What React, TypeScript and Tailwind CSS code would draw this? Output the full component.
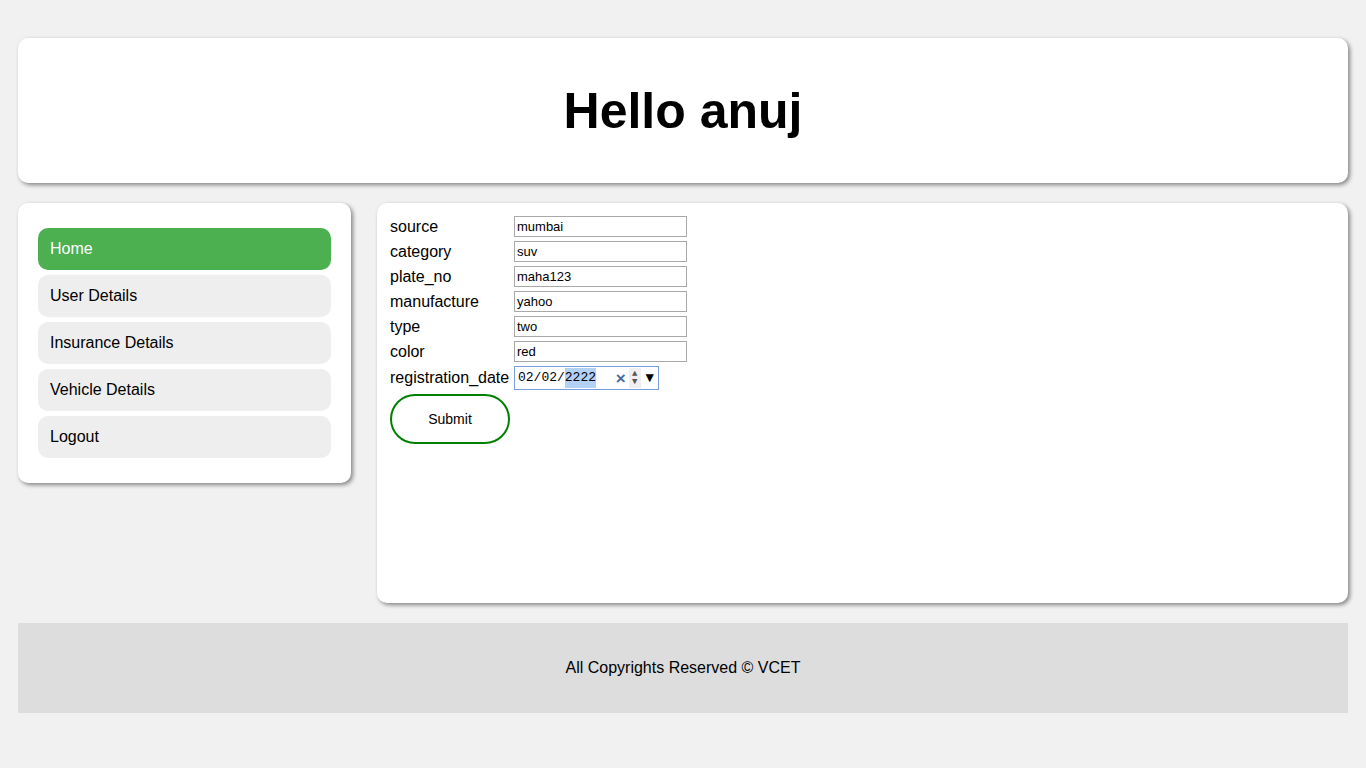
import React from 'react';

const fields = [
  { label: 'source', value: 'mumbai' },
  { label: 'category', value: 'suv' },
  { label: 'plate_no', value: 'maha123' },
  { label: 'manufacture', value: 'yahoo' },
  { label: 'type', value: 'two' },
  { label: 'color', value: 'red' },
];

const navItems = ['Home', 'User Details', 'Insurance Details', 'Vehicle Details', 'Logout'];

const App: React.FC = () => {
  return (
    <div className="min-h-[768px] bg-[#f1f1f1] px-[18px] pt-[38px] font-['Liberation_Sans',Arial,sans-serif] text-black">
      <header className="flex h-[145px] items-center justify-center rounded-[10px] bg-white shadow-[2px_2px_4px_rgba(0,0,0,0.45)]">
        <h1 className="text-[50px] font-bold leading-none">Hello anuj</h1>
      </header>

      <div className="mt-5 flex h-[400px] items-start gap-[26px]">
        <nav className="flex w-[333px] shrink-0 flex-col gap-[5px] rounded-[10px] bg-white px-5 py-[25px] shadow-[2px_2px_4px_rgba(0,0,0,0.45)]">
          {navItems.map((item, i) => (
            <a
              key={item}
              href="#"
              className={
                i === 0
                  ? 'flex h-[42px] items-center rounded-[10px] bg-[#4caf50] pl-3 text-base text-white'
                  : 'flex h-[42px] items-center rounded-[10px] bg-[#eeeeee] pl-3 text-base text-black'
              }
            >
              {item}
            </a>
          ))}
        </nav>

        <main className="h-full flex-1 rounded-[10px] bg-white px-[13px] pt-[13px] shadow-[2px_2px_4px_rgba(0,0,0,0.45)]">
          <form className="flex flex-col" onSubmit={(e) => e.preventDefault()}>
            {fields.map((f) => (
              <div key={f.label} className="flex h-[25px] items-start">
                <label className="mt-[1px] w-[124px] text-base leading-[20px]">{f.label}</label>
                <input
                  type="text"
                  defaultValue={f.value}
                  className="h-[21px] w-[173px] border border-[#a9a9a9] px-[2px] text-[13px] outline-none"
                />
              </div>
            ))}
            <div className="flex h-[28px] items-start">
              <label className="mt-[2px] w-[124px] text-base leading-[20px]">registration_date</label>
              <div className="flex h-[24px] w-[145px] items-center border border-[#7a9ce0] pl-[3px] pr-[4px] font-['Liberation_Mono',monospace] text-[13px]">
                <span>02/02/</span>
                <span className="bg-[#b3d0f5]">2222</span>
                <span className="ml-auto font-['Liberation_Sans',sans-serif] text-[17px] font-bold leading-none text-[#4a6a9a]">×</span>
                <span className="ml-[3px] flex h-[20px] w-[12px] flex-col items-center justify-center bg-[#efefef] text-[9px] leading-[8px] text-[#555]">
                  <span>▲</span>
                  <span>▼</span>
                </span>
                <span className="ml-[5px] text-[14px] leading-none">▼</span>
              </div>
            </div>
            <button
              type="submit"
              className="h-[50px] w-[120px] rounded-full border-2 border-[#008000] bg-white text-[14px] text-black"
            >
              Submit
            </button>
          </form>
        </main>
      </div>

      <footer className="mt-5 flex h-[90px] items-center justify-center bg-[#dddddd] text-base">
        All Copyrights Reserved © VCET
      </footer>
    </div>
  );
};

export default App;
